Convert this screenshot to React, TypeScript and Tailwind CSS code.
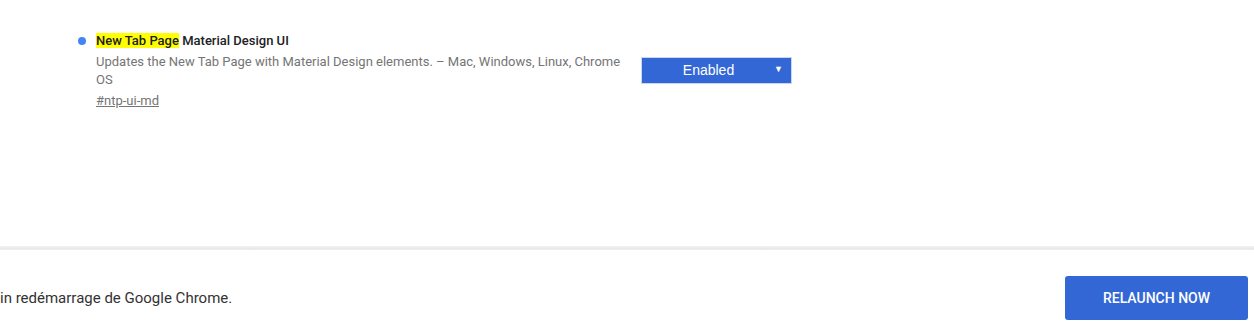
export default function App() {
  return (
    <div
      className="w-[1254px] h-[322px] bg-white flex flex-col overflow-hidden"
      style={{ fontFamily: "Roboto, 'Liberation Sans', sans-serif" }}
    >
      <div className="h-[246px] pt-[32px] pl-[78px]">
        <div className="flex">
          <div className="w-[563px] flex">
            <div className="w-[18px] pt-[5px]">
              <div className="w-[8px] h-[8px] rounded-full bg-[#4285f4]" />
            </div>
            <div className="flex-1">
              <div className="text-[13px] leading-[18px] font-medium text-[#202124]">
                <span className="bg-[#ffff00]">New Tab Page</span> Material Design UI
              </div>
              <div className="mt-[3px] text-[13px] leading-[18px] text-[#757575] pr-[4px]">
                Updates the New Tab Page with Material Design elements. – Mac, Windows, Linux, Chrome OS
              </div>
              <div className="mt-[3px] text-[13px] leading-[18px] text-[#757575] underline">
                #ntp-ui-md
              </div>
            </div>
          </div>
          <div className="pt-[25px]">
            <div
              className="w-[151px] h-[27px] bg-[#3367d6] border border-[#c9d6f3] flex items-center relative text-white text-[14px]"
              style={{ fontFamily: "'Liberation Sans', Arial, sans-serif" }}
            >
              <span className="flex-1 text-center pr-[16px]">Enabled</span>
              <span className="absolute right-[8px] top-[5px] text-[9px]">▼</span>
            </div>
          </div>
        </div>
      </div>
      <div className="h-[3px] bg-gradient-to-b from-[#f3f3f3] to-[#e6e6e6]" />
      <div className="flex-1 border-t border-[#ececec] flex items-start justify-between pr-[6px] pt-[26px]">
        <div className="h-[44px] flex items-center whitespace-nowrap text-[15px] text-[#333333]">
          in redémarrage de Google Chrome.
        </div>
        <button className="w-[183px] h-[44px] rounded-[3px] bg-[#3367d6] text-white text-[14px] font-medium">
          RELAUNCH NOW
        </button>
      </div>
    </div>
  );
}
